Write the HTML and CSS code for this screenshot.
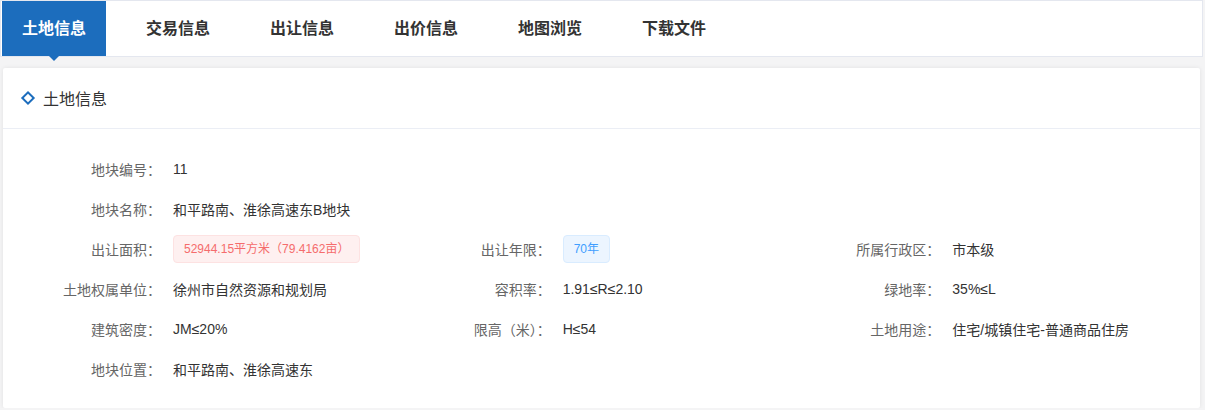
FILE: index.html
```html
<!DOCTYPE html>
<html lang="zh-CN">
<head>
<meta charset="utf-8">
<title>土地信息</title>
<link rel="stylesheet" href="styles.css">
</head>
<body>
<div class="tabs">
  <div class="tab active">土地信息</div>
  <div class="tab">交易信息</div>
  <div class="tab">出让信息</div>
  <div class="tab">出价信息</div>
  <div class="tab">地图浏览</div>
  <div class="tab">下载文件</div>
</div>
<div class="page">
  <div class="card">
    <div class="card-head">
      <span class="diamond"></span>
      <span class="card-title">土地信息</span>
    </div>
    <div class="info">
      <div class="item full"><span class="label">地块编号：</span><span class="value">11</span></div>
      <div class="item full"><span class="label">地块名称：</span><span class="value">和平路南、淮徐高速东B地块</span></div>
      <div class="item"><span class="label">出让面积：</span><span class="value"><span class="tag tag-danger">52944.15平方米（79.4162亩）</span></span></div>
      <div class="item"><span class="label">出让年限：</span><span class="value"><span class="tag tag-primary">70年</span></span></div>
      <div class="item"><span class="label">所属行政区：</span><span class="value">市本级</span></div>
      <div class="item"><span class="label">土地权属单位：</span><span class="value">徐州市自然资源和规划局</span></div>
      <div class="item"><span class="label">容积率：</span><span class="value">1.91≤R≤2.10</span></div>
      <div class="item"><span class="label">绿地率：</span><span class="value">35%≤L</span></div>
      <div class="item"><span class="label">建筑密度：</span><span class="value">JM≤20%</span></div>
      <div class="item"><span class="label">限高（米）：</span><span class="value">H≤54</span></div>
      <div class="item"><span class="label">土地用途：</span><span class="value">住宅/城镇住宅-普通商品住房</span></div>
      <div class="item full"><span class="label">地块位置：</span><span class="value">和平路南、淮徐高速东</span></div>
    </div>
  </div>
</div>
</body>
</html>
```

FILE: styles.css
```css
* {
  box-sizing: border-box;
}

body {
  margin: 0;
  font-family: "Liberation Sans", "Noto Sans CJK SC", sans-serif;
  background: #f4f4f5;
  color: #333;
}

.tabs {
  display: flex;
  gap: 20px;
  width: 1203px;
  height: 57px;
  padding-left: 1px;
  border: 1px solid #e4e7ef;
  background: #fff;
}

.tab {
  position: relative;
  padding: 0 20px;
  height: 55px;
  line-height: 55px;
  font-size: 16px;
  font-weight: bold;
  color: #333;
}

.tab.active {
  background: #1c6dbd;
  color: #fff;
}

.tab.active::after {
  content: "";
  position: absolute;
  left: 50%;
  top: 100%;
  margin-left: -5px;
  border-left: 5px solid transparent;
  border-right: 5px solid transparent;
  border-top: 5px solid #1c6dbd;
}

.page {
  padding: 11px 5px 0 3px;
}

.card {
  width: 1197px;
  background: #fff;
  border-radius: 2px;
  box-shadow: 0 0 4px rgba(0, 0, 0, 0.08);
}

.card-head {
  display: flex;
  align-items: center;
  height: 61px;
  padding-left: 20px;
  border-bottom: 1px solid #ebeef5;
}

.diamond {
  width: 10px;
  height: 10px;
  border: 2px solid #1c6dbd;
  transform: rotate(45deg);
  margin-right: 10px;
}

.card-title {
  font-size: 16px;
  color: #333;
}

.info {
  display: grid;
  grid-template-columns: repeat(3, 1fr);
  padding: 20px 14px 19px;
}

.item {
  display: flex;
  align-items: center;
  height: 40px;
  font-size: 14px;
}

.item.full {
  grid-column: 1 / -1;
}

.label {
  flex: none;
  width: 144px;
  text-align: right;
  color: #666;
}

.value {
  padding-left: 12px;
  color: #333;
}

.tag {
  display: inline-block;
  height: 28px;
  line-height: 26px;
  padding: 0 10px;
  font-size: 12px;
  border: 1px solid;
  border-radius: 4px;
}

.tag-danger {
  background: #fef0f0;
  border-color: #fde2e2;
  color: #f56c6c;
}

.tag-primary {
  background: #ecf5ff;
  border-color: #d9ecff;
  color: #409eff;
}
```
